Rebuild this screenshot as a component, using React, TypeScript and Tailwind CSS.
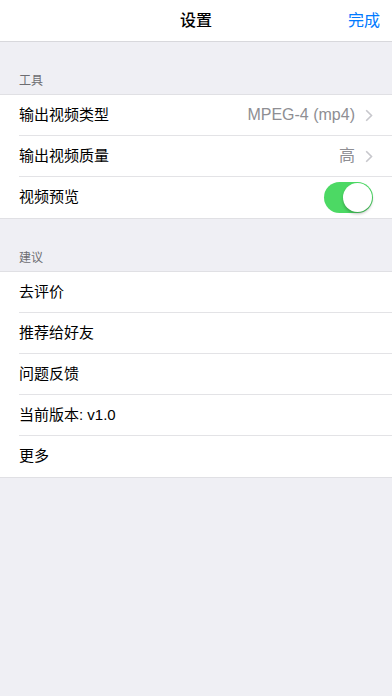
type Row = { label: string; value?: string; toggle?: boolean }

const TOOLS: Row[] = [
  { label: '输出视频类型', value: 'MPEG-4 (mp4)' },
  { label: '输出视频质量', value: '高' },
  { label: '视频预览', toggle: true },
]

const SUGGEST: Row[] = [
  { label: '去评价' },
  { label: '推荐给好友' },
  { label: '问题反馈' },
  { label: '当前版本: v1.0' },
  { label: '更多' },
]

function Chevron() {
  return (
    <svg width="8" height="13" viewBox="0 0 8 13" className="ml-[10px]">
      <path d="M1.2 1.2 L6.5 6.5 L1.2 11.8" fill="none" stroke="#c7c7cc" strokeWidth="1.6" />
    </svg>
  )
}

function Toggle() {
  return (
    <div className="relative h-[31px] w-[49px] rounded-full bg-[#4cd964]">
      <div className="absolute right-[1px] top-[1px] h-[29px] w-[29px] rounded-full bg-white shadow-[0_2px_3px_rgba(0,0,0,0.25)]" />
    </div>
  )
}

function Group({ title, rows }: { title: string; rows: Row[] }) {
  return (
    <div>
      <div className="h-[52px] flex items-end pb-[4px] pl-[19px] text-[12px] text-[#6d6d72]">{title}</div>
      <div className="bg-white border-y border-[#e0e0e4]">
        {rows.map((r, i) => (
          <div key={r.label} className="pl-[19px]">
            <div
              className={
                'h-[41px] flex items-center pr-[19px] ' +
                (i < rows.length - 1 ? 'border-b border-[#e3e3e6]' : '')
              }
            >
              <span className="flex-1 text-[15px] text-black">{r.label}</span>
              {r.value && (
                <span className="flex items-center text-[16px] text-[#8e8e93]">
                  {r.value}
                  <Chevron />
                </span>
              )}
              {r.toggle && <Toggle />}
            </div>
          </div>
        ))}
      </div>
    </div>
  )
}

export default function App() {
  return (
    <div
      className="w-[392px] h-[696px] bg-[#efeff4] overflow-hidden"
      style={{ fontFamily: '"Liberation Sans", "Noto Sans CJK SC", sans-serif' }}
    >
      <div className="relative h-[42px] bg-white border-b border-[#d8d8dc] flex items-center justify-center">
        <span className="text-[16px] font-medium text-black">设置</span>
        <span className="absolute right-[12px] text-[16px] text-[#007aff]">完成</span>
      </div>
      <Group title="工具" rows={TOOLS} />
      <Group title="建议" rows={SUGGEST} />
    </div>
  )
}
